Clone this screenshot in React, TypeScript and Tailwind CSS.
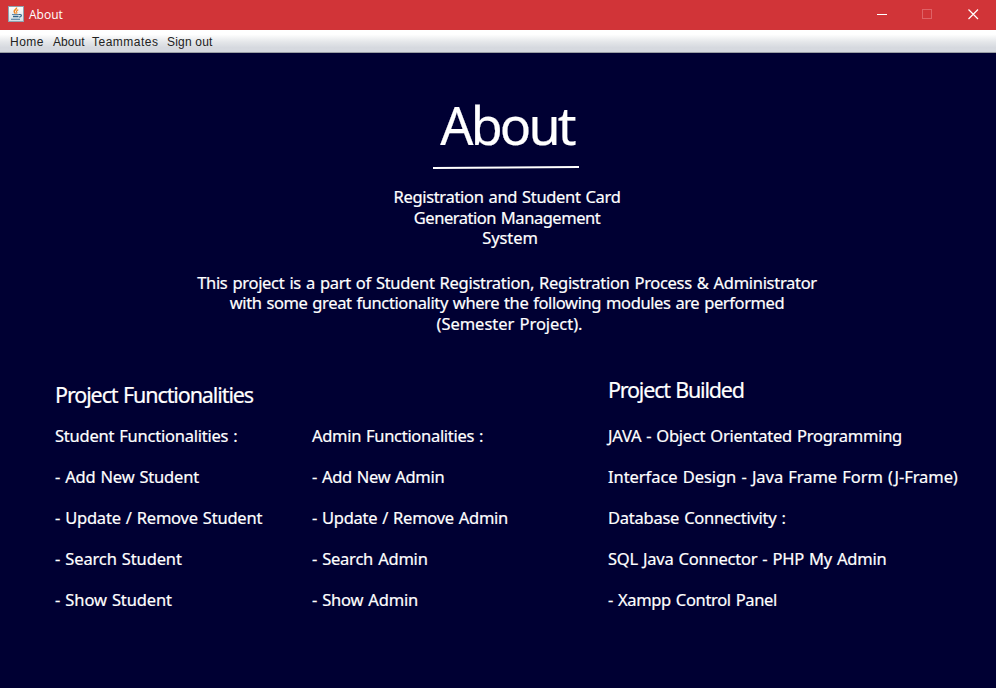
function JavaIcon() {
  return (
    <svg width="16" height="16" viewBox="0 0 16 16" className="mb-[2px] block">
      <defs>
        <linearGradient id="tile" x1="0" y1="0" x2="0" y2="1">
          <stop offset="0" stopColor="#ffffff" />
          <stop offset="1" stopColor="#d3dee5" />
        </linearGradient>
      </defs>
      <rect x="0.5" y="0.5" width="15" height="15" fill="url(#tile)" stroke="#8fa3b0" />
      <path d="M8.500 1.500c.6 1.700-2.600 2.300-2.300 4 .1.900 1 1.300.9 2.300" fill="none" stroke="#ef8722" strokeWidth="1.500" />
      <path d="M10.300 3.800c-1.500.6-2.200 1.300-1.600 2.200.5.700.3 1.200-.3 1.700" fill="none" stroke="#ef8722" strokeWidth="1.100" />
      <path d="M4 8.500h7" fill="none" stroke="#5f87a6" strokeWidth="1" />
      <path d="M5 10.500h5.500" fill="none" stroke="#2f6288" strokeWidth="1.500" />
      <path d="M3 13.300h9" fill="none" stroke="#5f87a6" strokeWidth="1.200" />
      <path d="M11 8.500c3.400-.5 3 2.200.2 2.600" fill="none" stroke="#2f6288" strokeWidth="1.100" />
    </svg>
  );
}

type Line = { text: string; cls: string };

const student: Line[] = [
  { text: "Student Functionalities :", cls: "tracking-[-0.23px]" },
  { text: "- Add New Student", cls: "tracking-[-0.2px]" },
  { text: "- Update / Remove Student", cls: "tracking-[-0.22px]" },
  { text: "- Search Student", cls: "tracking-[-0.14px]" },
  { text: "- Show Student", cls: "tracking-[-0.12px]" },
];

const admin: Line[] = [
  { text: "Admin Functionalities :", cls: "tracking-[-0.3px]" },
  { text: "- Add New Admin", cls: "tracking-[-0.32px]" },
  { text: "- Update / Remove Admin", cls: "tracking-[-0.28px]" },
  { text: "- Search Admin", cls: "tracking-[-0.22px]" },
  { text: "- Show Admin", cls: "tracking-[-0.2px]" },
];

const build: Line[] = [
  { text: "JAVA - Object Orientated Programming", cls: "tracking-[-0.25px]" },
  { text: "Interface Design - Java Frame Form (J-Frame)", cls: "tracking-[-0.06px]" },
  { text: "Database Connectivity :", cls: "tracking-[-0.25px]" },
  { text: "SQL Java Connector - PHP My Admin", cls: "tracking-[-0.23px]" },
  { text: "- Xampp Control Panel", cls: "tracking-[-0.34px]" },
];

function List({ lines }: { lines: Line[] }) {
  return (
    <ul className="leading-[41px]">
      {lines.map((l) => (
        <li key={l.text} className={l.cls}>{l.text}</li>
      ))}
    </ul>
  );
}

export default function App() {
  return (
    <div className="flex h-[688px] w-[996px] flex-col overflow-hidden bg-[#000033] whitespace-nowrap">
      <header className="flex h-[30px] shrink-0 items-center bg-[#d13438] pl-2 text-white">
        <JavaIcon />
        <span className="ml-[5px] font-['Open_Sans','Noto_Sans',sans-serif] text-[12px] leading-4">About</span>
        <div className="ml-auto flex h-[30px]">
          <svg width="46" height="30" shapeRendering="crispEdges"><path d="M18 14.500h10" stroke="#fff" /></svg>
          <svg width="46" height="30" shapeRendering="crispEdges"><rect x="17.500" y="9.500" width="9" height="9" fill="none" stroke="#df6266" /></svg>
          <svg width="45" height="30"><path d="M17.500 9.500l9.500 9.500M27 9.500l-9.500 9.500" stroke="#fff" strokeWidth="1.200" /></svg>
        </div>
      </header>
      <nav className="flex h-[23px] shrink-0 items-center border-b border-[#9a9fa5] bg-linear-to-b from-white from-20% via-[#e4e6e9] via-55% to-[#d6d9df] to-80% pt-[2px] pl-[10px] font-['Liberation_Sans',Arial,sans-serif] text-[12px] leading-4 text-[#222]">
        <span className="w-[43px] tracking-[0.5px]">Home</span>
        <span className="w-[39px] tracking-[0.05px]">About</span>
        <span className="w-[75px] tracking-[0.5px]">Teammates</span>
        <span className="tracking-[0.2px]">Sign out</span>
      </nav>
      <main className="flex flex-1 flex-col pt-[40px] font-['Noto_Sans','DejaVu_Sans_Condensed',sans-serif] text-[16.5px] text-white [-webkit-text-stroke:0.2px_white] [word-spacing:1px]">
        <section className="flex w-[1014px] flex-col items-center leading-[20.5px]">
          <h1 className="text-[52px] leading-[64px] tracking-[-2.8px]">About</h1>
          <svg className="mt-[8px] ml-[-2px]" width="146" height="5"><path d="M0 3L146 2" stroke="#fff" strokeWidth="2" /></svg>
          <p className="mt-[17px] tracking-[-0.33px]">Registration and Student Card</p>
          <p className="tracking-[-0.47px]">Generation Management</p>
          <p className="ml-[6px] tracking-[-0.1px]">System</p>
          <p className="mt-[24px] tracking-[-0.3px]">This project is a part of Student Registration, Registration Process &amp; Administrator</p>
          <p className="tracking-[-0.39px]">with some great functionality where the following modules are performed</p>
          <p className="ml-[5px] tracking-[-0.03px]">(Semester Project).</p>
        </section>
        <section className="mt-[42px] flex pl-[55px]">
          <div className="w-[553px]">
            <h2 className="mt-[5px] mb-[6px] text-[21.5px] leading-[28px] tracking-[-1.1px]">Project Functionalities</h2>
            <div className="flex">
              <div className="w-[257px]"><List lines={student} /></div>
              <List lines={admin} />
            </div>
          </div>
          <div>
            <h2 className="mb-[11px] text-[21.5px] leading-[28px] tracking-[-1.2px]">Project Builded</h2>
            <List lines={build} />
          </div>
        </section>
      </main>
    </div>
  );
}
